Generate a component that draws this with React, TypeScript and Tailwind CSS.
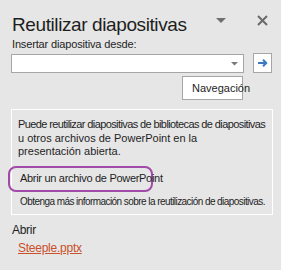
export default function App() {
  return (
    <div className="w-[281px] h-[270px] overflow-hidden bg-[#e6e6e6] text-[#1e1e1e] font-['Liberation_Sans',Arial,sans-serif]">
      {/* header */}
      <div className="flex items-start pl-[12px] pt-[13px]">
        <h1 className="text-[19px] leading-[24px] tracking-[-0.4px] whitespace-nowrap">Reutilizar diapositivas</h1>
        <div className="ml-auto flex items-start gap-[31px] pr-[13px]">
          <svg className="mt-[5px]" width="10" height="6" viewBox="0 0 10 6">
            <path d="M0 0h10L5 5z" fill="#6f6f6f" />
          </svg>
          <svg className="mt-[2px]" width="11" height="11" viewBox="0 0 11 11">
            <path d="M1 1l9 9M10 1l-9 9" stroke="#6a6a6a" strokeWidth="2" />
          </svg>
        </div>
      </div>

      <div className="pl-[12px] text-[11px] leading-[14px] tracking-[-0.15px] whitespace-nowrap">Insertar diapositiva desde:</div>

      {/* source input */}
      <div className="flex items-start pl-[11px] mt-[2px]">
        <div className="mt-[1px] w-[233px] h-[19px] bg-white border border-[#a6a6a6] flex items-center justify-end pr-[5px]">
          <svg width="7" height="4" viewBox="0 0 7 4">
            <path d="M0 0h7L3.5 3.5z" fill="#7a7a7a" />
          </svg>
        </div>
        <button className="ml-[9px] w-[19px] h-[20px] bg-white border border-[#a6a6a6] flex items-center justify-center">
          <svg width="10" height="8" viewBox="0 0 10 8">
            <path d="M0 4h8M5 0.8L8.2 4L5 7.2" stroke="#3a78c0" strokeWidth="2" fill="none" />
          </svg>
        </button>
      </div>

      <div className="flex justify-end pr-[38px] mt-[3px]">
        <button className="w-[61px] h-[24px] bg-white border border-[#a6a6a6] text-[11px] leading-[14px] pl-[9px] text-left whitespace-nowrap overflow-visible">
          Navegación
        </button>
      </div>

      {/* info box */}
      <div className="ml-[11px] mt-[9px] w-[262px] h-[106px] border border-white px-[6px] pt-[8px] text-[11px] leading-[13.5px] whitespace-nowrap">
        <p>
          <span className="tracking-[-0.6px]">Puede reutilizar diapositivas de bibliotecas de diapositivas</span>
          <br />u otros archivos de PowerPoint en la
          <br />presentación abierta.
        </p>
        <div className="-ml-[10px] mt-[7px] w-[145px] h-[26px] rounded-[8px] border-[2.5px] border-[#a24aa8] flex items-center pl-[10px] tracking-[-0.3px]">
          Abrir un archivo de PowerPoint
        </div>
        <p className="mt-[3px] ml-[2px] text-[10px] leading-[13px] tracking-[-0.56px]">
          Obtenga más información sobre la reutilización de diapositivas.
        </p>
      </div>

      <div className="pl-[12px] mt-[8px] text-[12px] leading-[15px] tracking-[-0.3px]">Abrir</div>
      <div className="pl-[18px] mt-[3px] text-[12px] leading-[15px] tracking-[-0.25px] text-[#c8502a] underline">Steeple.pptx</div>
    </div>
  );
}
